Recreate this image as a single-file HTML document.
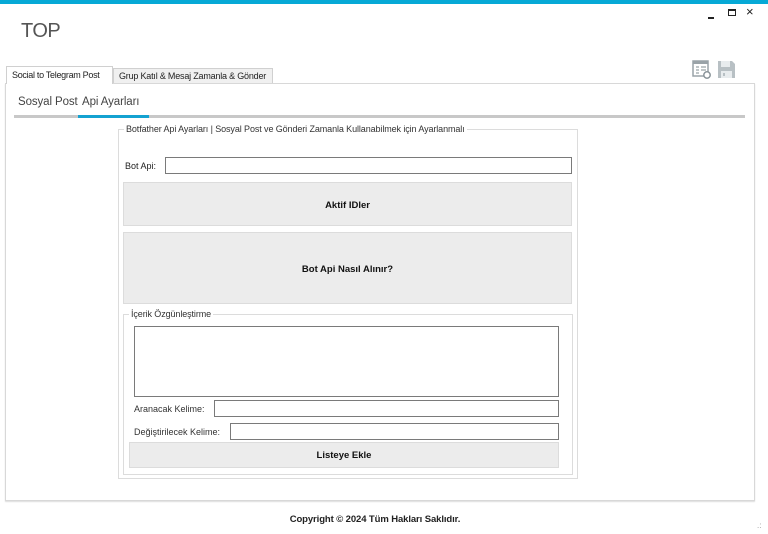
<!DOCTYPE html>
<html><head><meta charset="utf-8"><style>
*{box-sizing:border-box;margin:0;padding:0}
body{width:768px;height:534px;background:#fff;position:relative;overflow:hidden;font-family:"Liberation Sans",sans-serif;font-size:9px;color:#222}
.a{position:absolute;white-space:nowrap}
.in{position:absolute;background:#fff;border:1px solid #7a7a7a}
.btn{position:absolute;background:#ececec;border:1px solid #dcdcdc;font-weight:bold;font-size:9.5px;display:flex;align-items:center;justify-content:center;color:#111}
.gb{position:absolute;border:1px solid #dcdcdc}
.gt{position:absolute;background:#fff;padding:0 2px;top:-6px;left:5px;white-space:nowrap;color:#333;letter-spacing:-0.1px}
</style></head><body>
<div class="a" style="left:0;top:0;width:768px;height:4px;background:#06a9d6"></div>
<div class="a" style="left:21px;top:20px;font-size:20px;color:#555;letter-spacing:-0.5px">TOP</div>
<div class="a" style="left:708px;top:17px;width:6px;height:2px;background:#222"></div>
<div class="a" style="left:728px;top:9px;width:8px;height:7px;border:1px solid #222;border-top-width:2px"></div>
<div class="a" style="left:746px;top:4px;font-size:13px;color:#222">×</div>
<svg class="a" style="left:692px;top:60px" width="20" height="19" viewBox="0 0 20 19"><rect x="1" y="1" width="15" height="15" fill="none" stroke="#9aa3a8" stroke-width="1.5"/><rect x="1" y="1" width="15" height="3" fill="#9aa3a8"/><path d="M4 7h3M4 10h3M4 13h3M9 7h5M9 10h5" stroke="#9aa3a8" stroke-width="1.3"/><circle cx="15" cy="15" r="3.2" fill="#fff" stroke="#8a9499" stroke-width="1.5"/></svg>
<svg class="a" style="left:717px;top:60px" width="19" height="19" viewBox="0 0 19 19"><path d="M1 1h14l3 3v14H1z" fill="#b8c0c4"/><rect x="4" y="1" width="9" height="6" fill="#e8ecee"/><rect x="4" y="11" width="11" height="7" fill="#e8ecee"/><rect x="6" y="13" width="2" height="3" fill="#b8c0c4"/></svg>
<div class="a" style="left:5px;top:83px;width:750px;height:418px;border:1px solid #d8d8d8;box-shadow:0 1px 1px #ddd"></div>
<div class="a" style="left:6px;top:66px;width:107px;height:18px;background:#fff;border:1px solid #d0d0d0;border-bottom:none;padding:3px 0 0 5px;font-size:9px;letter-spacing:-0.3px">Social to Telegram Post</div>
<div class="a" style="left:113px;top:68px;width:160px;height:15px;background:#f0f0f0;border:1px solid #d0d0d0;border-bottom:none;padding:2px 0 0 5px;font-size:9px;letter-spacing:-0.2px">Grup Katıl &amp; Mesaj Zamanla &amp; Gönder</div>
<div class="a" style="left:18px;top:96px;font-size:11.5px;color:#444;letter-spacing:-0.1px">Sosyal Post</div>
<div class="a" style="left:82px;top:96px;font-size:11.5px;color:#444;letter-spacing:-0.1px">Api Ayarları</div>
<div class="a" style="left:14px;top:115px;width:731px;height:3px;background:#c8c8c8"></div>
<div class="a" style="left:78px;top:115px;width:71px;height:3px;background:#14a2d1"></div>
<div class="gb" style="left:118px;top:129px;width:460px;height:350px"><span class="gt" style="left:5px">Botfather Api Ayarları | Sosyal Post ve Gönderi Zamanla Kullanabilmek için Ayarlanmalı</span></div>
<div class="a" style="left:125px;top:161px">Bot Api:</div>
<div class="in" style="left:165px;top:157px;width:407px;height:17px"></div>
<div class="btn" style="left:123px;top:182px;width:449px;height:44px;padding-top:3px">Aktif IDler</div>
<div class="btn" style="left:123px;top:232px;width:449px;height:72px;padding-top:2px">Bot Api Nasıl Alınır?</div>
<div class="gb" style="left:123px;top:314px;width:450px;height:161px"><span class="gt" style="left:5px">İçerik Özgünleştirme</span></div>
<div class="in" style="left:134px;top:326px;width:425px;height:71px"></div>
<div class="a" style="left:134px;top:404px;color:#333">Aranacak Kelime:</div>
<div class="in" style="left:214px;top:400px;width:345px;height:17px"></div>
<div class="a" style="left:134px;top:427px;color:#333">Değiştirilecek Kelime:</div>
<div class="in" style="left:230px;top:423px;width:329px;height:17px"></div>
<div class="btn" style="left:129px;top:442px;width:430px;height:26px">Listeye Ekle</div>
<div class="a" style="left:0;width:750px;top:514px;text-align:center;font-size:9.5px;color:#222;font-weight:600;letter-spacing:-0.1px">Copyright © 2024 Tüm Hakları Saklıdır.</div>
<div class="a" style="left:757px;top:521px;font-size:8px;color:#999">.:</div>
</body></html>
